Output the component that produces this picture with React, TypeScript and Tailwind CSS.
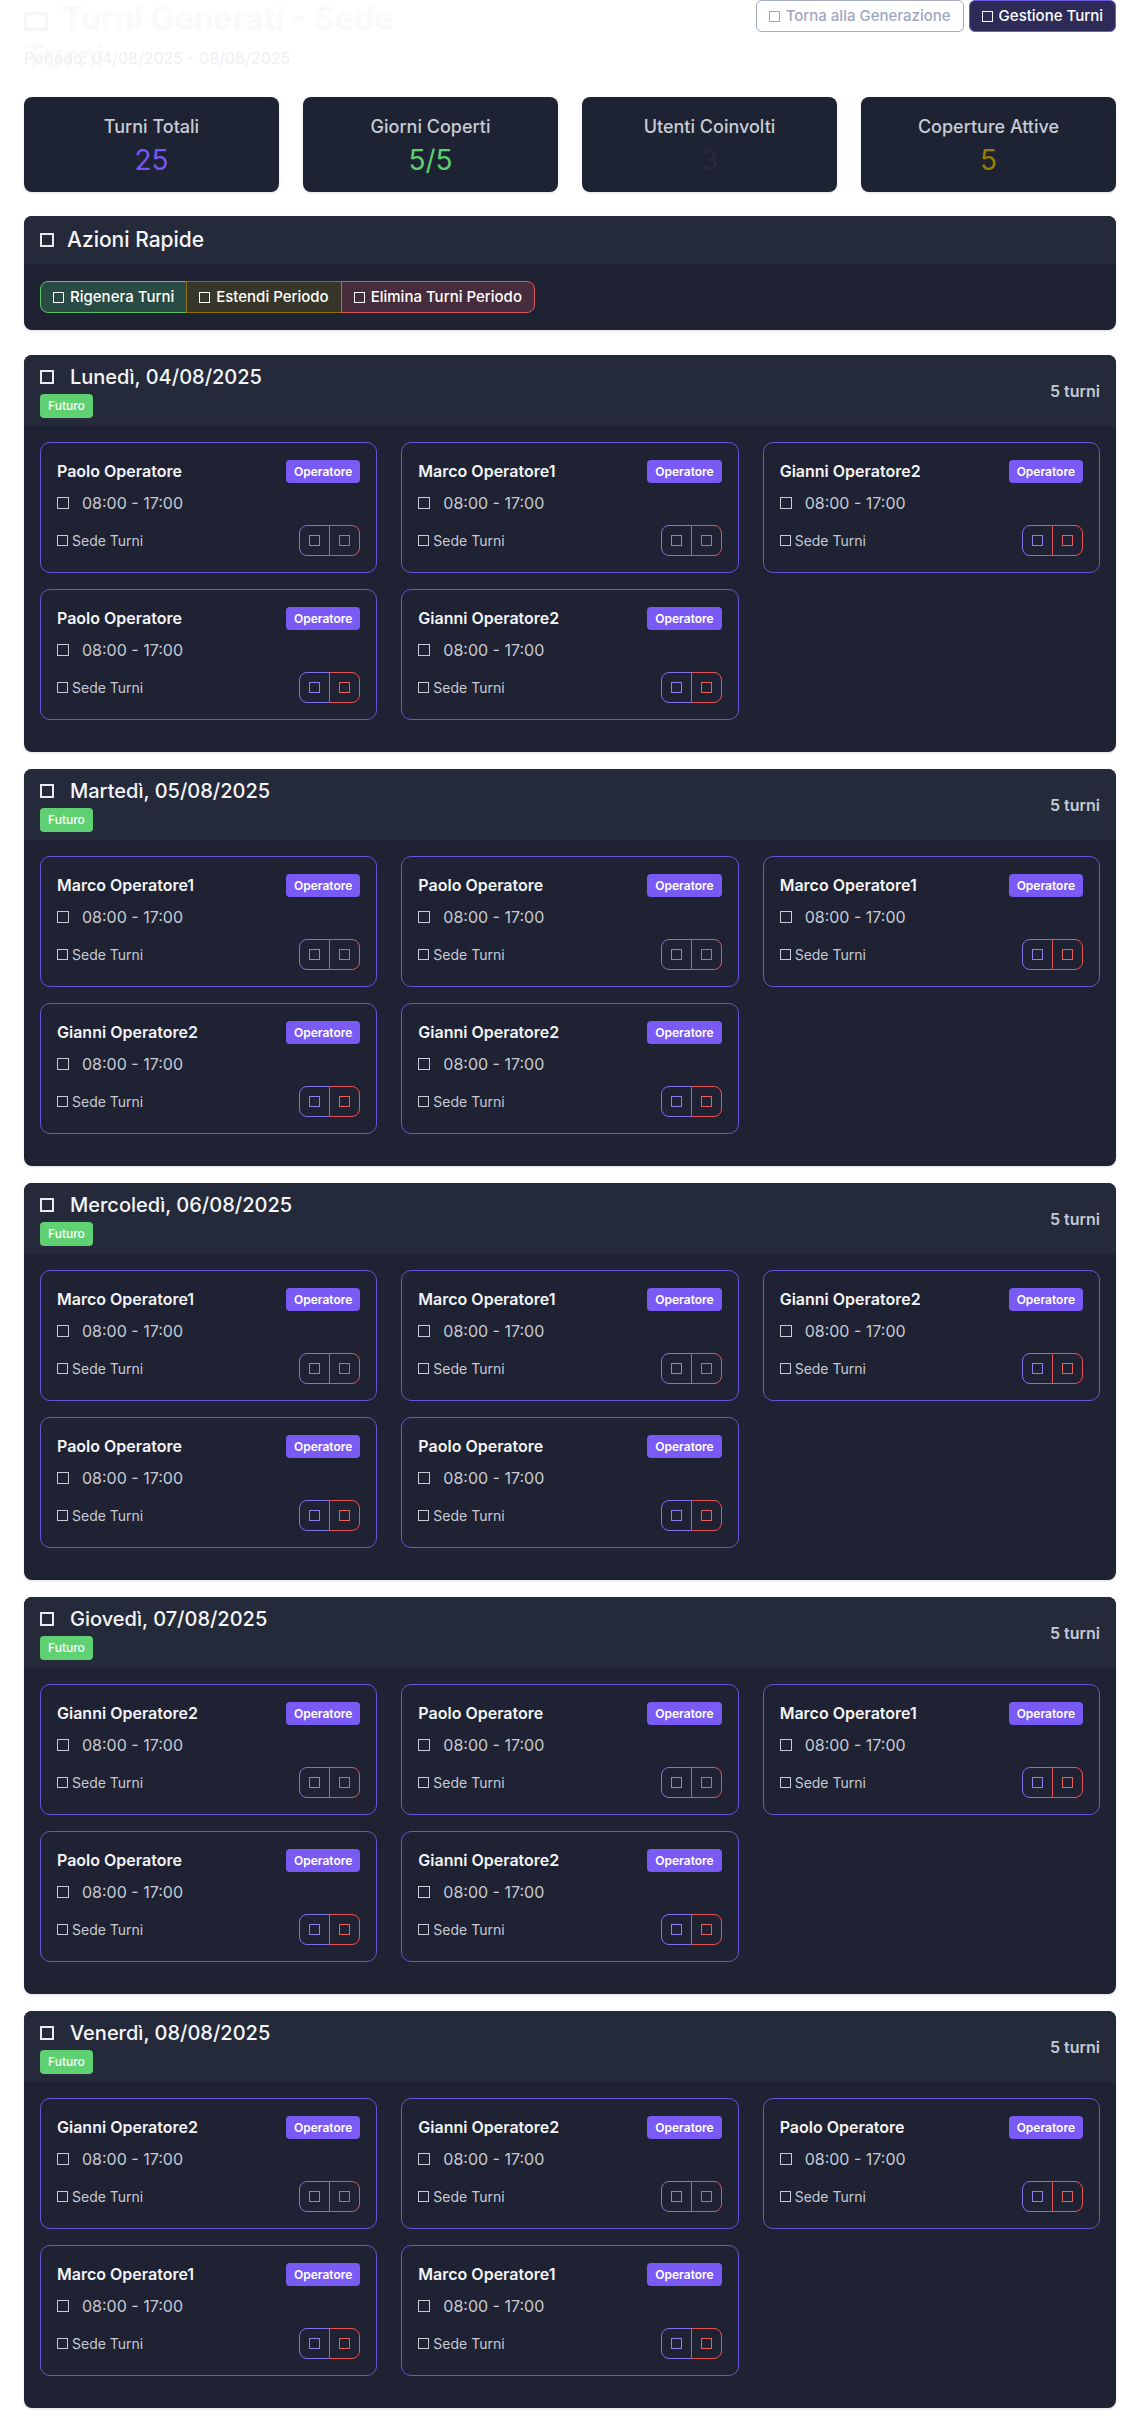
import React from 'react'

const days = [
  { label: 'Lunedì, 04/08/2025', people: ['Paolo Operatore', 'Marco Operatore1', 'Gianni Operatore2', 'Paolo Operatore', 'Gianni Operatore2'] },
  { label: 'Martedì, 05/08/2025', people: ['Marco Operatore1', 'Paolo Operatore', 'Marco Operatore1', 'Gianni Operatore2', 'Gianni Operatore2'] },
  { label: 'Mercoledì, 06/08/2025', people: ['Marco Operatore1', 'Marco Operatore1', 'Gianni Operatore2', 'Paolo Operatore', 'Paolo Operatore'] },
  { label: 'Giovedì, 07/08/2025', people: ['Gianni Operatore2', 'Paolo Operatore', 'Marco Operatore1', 'Paolo Operatore', 'Gianni Operatore2'] },
  { label: 'Venerdì, 08/08/2025', people: ['Gianni Operatore2', 'Gianni Operatore2', 'Paolo Operatore', 'Marco Operatore1', 'Marco Operatore1'] },
]

const stats = [
  { label: 'Turni Totali', value: '25', color: 'text-[#7657f2]' },
  { label: 'Giorni Coperti', value: '5/5', color: 'text-[#5dcf72]' },
  { label: 'Utenti Coinvolti', value: '3', color: 'text-[#262b37]' },
  { label: 'Coperture Attive', value: '5', color: 'text-[#9c7d00]' },
]

// missing icon-font glyphs show up as hollow squares
function Sq({ className }: { className: string }) {
  return <span className={`inline-block shrink-0 ${className}`} />
}

function ShiftCard({ name }: { name: string }) {
  return (
    <div className="mb-4 rounded-[10px] border border-[#6556d8] bg-[#1e2233] p-4">
      <div className="flex items-center justify-between mb-2">
        <span className="text-base leading-6 font-semibold text-[#f3f4f6]">{name}</span>
        <span className="h-[23px] rounded px-2 bg-[#7a5af5] text-xs leading-[23px] font-semibold text-white">Operatore</span>
      </div>
      <div className="flex items-center mb-2.5 text-base leading-6 text-[#c7cad2]">
        <Sq className="w-3 h-3 border-[1.5px] border-[#c7cad2] mr-[13px]" />
        08:00 - 17:00
      </div>
      <div className="flex items-center justify-between">
        <span className="flex items-center text-sm text-[#c7cad2]">
          <Sq className="w-[11px] h-[11px] border-[1.5px] border-[#c7cad2] mr-[4px]" />
          Sede Turni
        </span>
        <div className="flex">
          <button className="w-[31px] h-[31px] flex items-center justify-center rounded-l-lg border border-[#7a72e6]">
            <Sq className="w-[11px] h-[11px] border-[1.5px] border-[#8d7ff2]" />
          </button>
          <button className="w-[31px] h-[31px] -ml-px flex items-center justify-center rounded-r-lg border border-[#e35353]">
            <Sq className="w-[11px] h-[11px] border-[1.5px] border-[#ef5b5b]" />
          </button>
        </div>
      </div>
    </div>
  )
}

function DayPanel({ label, people }: { label: string; people: string[] }) {
  return (
    <div className="mb-[17px] rounded-lg overflow-hidden bg-[#1e2233] shadow-sm">
      <div className="flex items-center justify-between bg-[#252a3b] px-4 py-2">
        <div>
          <h5 className="flex items-center text-xl leading-7 font-medium text-[#f5f6f8]">
            <Sq className="w-[14px] h-[14px] border-2 border-[#e8eaee] mr-4" />
            {label}
          </h5>
          <span className="mt-[3px] inline-block h-6 rounded px-2 bg-[#5fd173] text-xs leading-6 font-medium text-white">Futuro</span>
        </div>
        <span className="text-base font-semibold text-[#c5c9d1]">{people.length} turni</span>
      </div>
      <div className="grid grid-cols-3 gap-x-6 p-4 pb-0">
        {people.map((p, i) => <ShiftCard key={i} name={p} />)}
      </div>
      <div className="h-4" />
    </div>
  )
}

export default function App() {
  return (
    <div className="min-h-screen bg-white px-6 font-['Inter','Noto_Sans',sans-serif]">
      {/* Header */}
      <div className="flex items-start justify-between mb-[27px]">
        <div>
          <h1 className="w-[400px] h-[38px] mb-2 text-[32px] leading-[38.4px] font-bold text-[#f8fafc]">
            <Sq className="w-6 h-[19px] border-[3px] border-[#f4f6f9] mr-[14px] align-[-1px]" />
            Turni Generati - Sede Turni
          </h1>
          <p className="text-base leading-6 text-[#eef0f4]">Periodo: 04/08/2025 - 08/08/2025</p>
        </div>
        <div className="flex gap-[5px]">
          <button className="h-8 flex items-center rounded-md border border-[#a3abc4] bg-white px-3 text-[15px] font-medium text-[#a0a8c0]">
            <Sq className="w-[11px] h-[11px] border-[1.5px] border-[#a0a8c0] mr-[6px]" />
            Torna alla Generazione
          </button>
          <button className="h-8 flex items-center rounded-md border border-[#6b5ce0] bg-[#2e2b58] px-3 text-[15px] font-medium text-white">
            <Sq className="w-[11px] h-[11px] border-[1.5px] border-white mr-[6px]" />
            Gestione Turni
          </button>
        </div>
      </div>

      {/* Stats */}
      <div className="grid grid-cols-4 gap-6 mb-6">
        {stats.map(s => (
          <div key={s.label} className="rounded-lg bg-[#1e2333] p-4 text-center shadow-sm">
            <div className="text-lg leading-7 font-medium text-[#c8ccd4]">{s.label}</div>
            <div className={`mt-1 text-[28px] leading-[31px] ${s.color}`}>{s.value}</div>
          </div>
        ))}
      </div>

      {/* Azioni rapide */}
      <div className="mb-[25px] rounded-lg overflow-hidden bg-[#1e2233] shadow-sm">
        <div className="flex items-center bg-[#252a3b] px-4 py-3">
          <Sq className="w-[14px] h-[14px] border-2 border-[#e8eaee] mr-[13px]" />
          <span className="text-[21px] leading-6 font-medium text-[#f5f6f8]">Azioni Rapide</span>
        </div>
        <div className="px-4 py-[17px]">
          <div className="flex">
            <button className="h-8 flex items-center rounded-l-lg border border-[#5cc46c] bg-[#2a4a44] px-3 text-[15px] font-medium text-white">
              <Sq className="w-[11px] h-[11px] border-[1.5px] border-white mr-[6px]" />
              Rigenera Turni
            </button>
            <button className="h-8 -ml-px flex items-center border border-[#8c7100] bg-[#36372a] px-3 text-[15px] font-medium text-white">
              <Sq className="w-[11px] h-[11px] border-[1.5px] border-white mr-[6px]" />
              Estendi Periodo
            </button>
            <button className="h-8 -ml-px flex items-center rounded-r-lg border border-[#e05858] bg-[#462c3c] px-3 text-[15px] font-medium text-white">
              <Sq className="w-[11px] h-[11px] border-[1.5px] border-white mr-[6px]" />
              Elimina Turni Periodo
            </button>
          </div>
        </div>
      </div>

      {days.map(d => <DayPanel key={d.label} label={d.label} people={d.people} />)}
    </div>
  )
}
